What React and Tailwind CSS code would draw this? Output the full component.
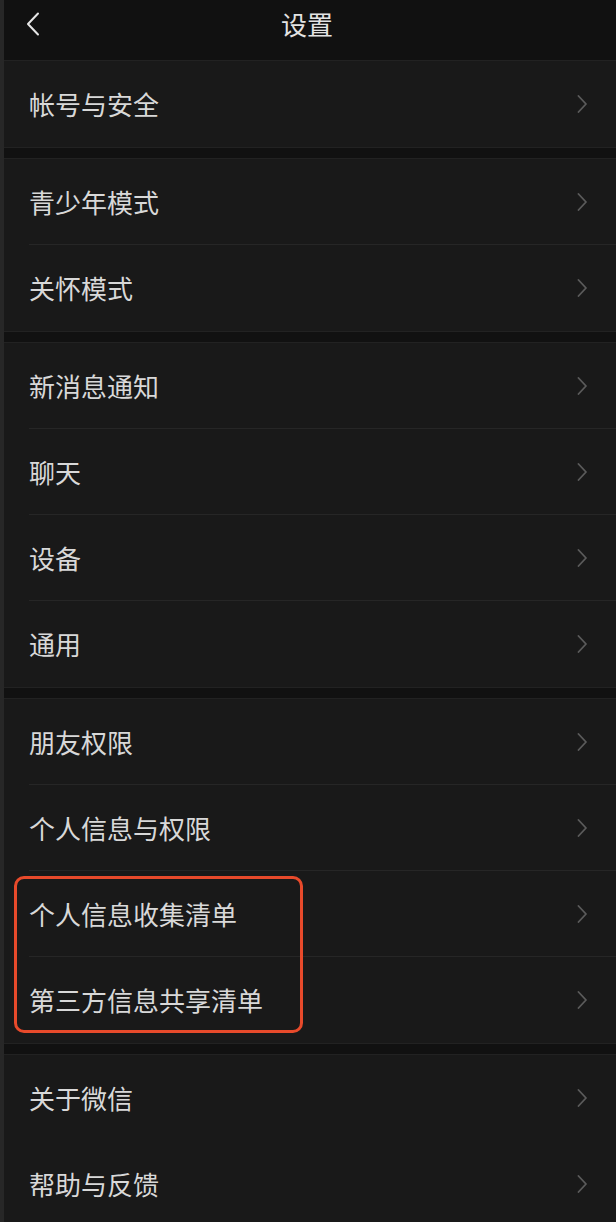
import React from "react";

const groups = [
  ["帐号与安全"],
  ["青少年模式", "关怀模式"],
  ["新消息通知", "聊天", "设备", "通用"],
  ["朋友权限", "个人信息与权限", "个人信息收集清单", "第三方信息共享清单"],
  ["关于微信", "帮助与反馈"],
];

const font = { fontFamily: '"Noto Sans CJK SC", "Noto Sans", sans-serif' };

const Chevron = () => (
  <svg width="11" height="18" viewBox="0 0 11 18" fill="none">
    <polyline points="1.5,1 9,9 1.5,17" stroke="#5b5b5b" strokeWidth="1.8" strokeLinecap="round" strokeLinejoin="round" />
  </svg>
);

const Row = ({ label, divider }) => (
  <div className="relative flex h-[86px] shrink-0 items-center justify-between bg-[#191919] pl-[25px] pr-[28px]">
    <span className="text-[26px] leading-none text-[#d8d8d8]">{label}</span>
    <Chevron />
    {divider && <div className="absolute bottom-0 left-[25px] right-0 h-px bg-[#262626]" />}
  </div>
);

const Group = ({ items, gi }) => {
  if (gi === 3) {
    return (
      <div className="shrink-0 border-y border-[#222]">
        <Row label={items[0]} divider />
        <Row label={items[1]} divider />
        <div className="relative">
          <Row label={items[2]} divider />
          <Row label={items[3]} />
          <div className="absolute top-[5px] left-[10px] h-[157px] w-[289px] rounded-[10px] border-[3px] border-[#e84a2b]" />
        </div>
      </div>
    );
  }
  return (
    <div className="shrink-0 border-y border-[#222]">
      {items.map((label, i) => (
        <Row key={label} label={label} divider={i < items.length - 1 && gi !== 4} />
      ))}
    </div>
  );
};

export default function App() {
  return (
    <div className="flex h-[1222px] w-[616px] overflow-hidden bg-[#111111]" style={font}>
      <div className="w-[4px] shrink-0 bg-[#272727]" />
      <div className="flex flex-1 flex-col">
        <div className="relative flex h-[60px] shrink-0 items-start justify-center bg-[#111111] pt-[8px] pr-[6px]">
          <svg className="absolute left-[22px] top-[12px]" width="14" height="24" viewBox="0 0 14 24" fill="none">
            <polyline points="12,1.5 2,12 12,22.5" stroke="#e6e6e6" strokeWidth="2" strokeLinecap="round" strokeLinejoin="round" />
          </svg>
          <span className="text-[26px] leading-[32px] text-[#e3e3e3]">设置</span>
        </div>
        <div className="flex shrink-0 flex-col gap-[10px]">
          {groups.map((items, gi) => (
            <Group key={gi} items={items} gi={gi} />
          ))}
        </div>
      </div>
    </div>
  );
}
